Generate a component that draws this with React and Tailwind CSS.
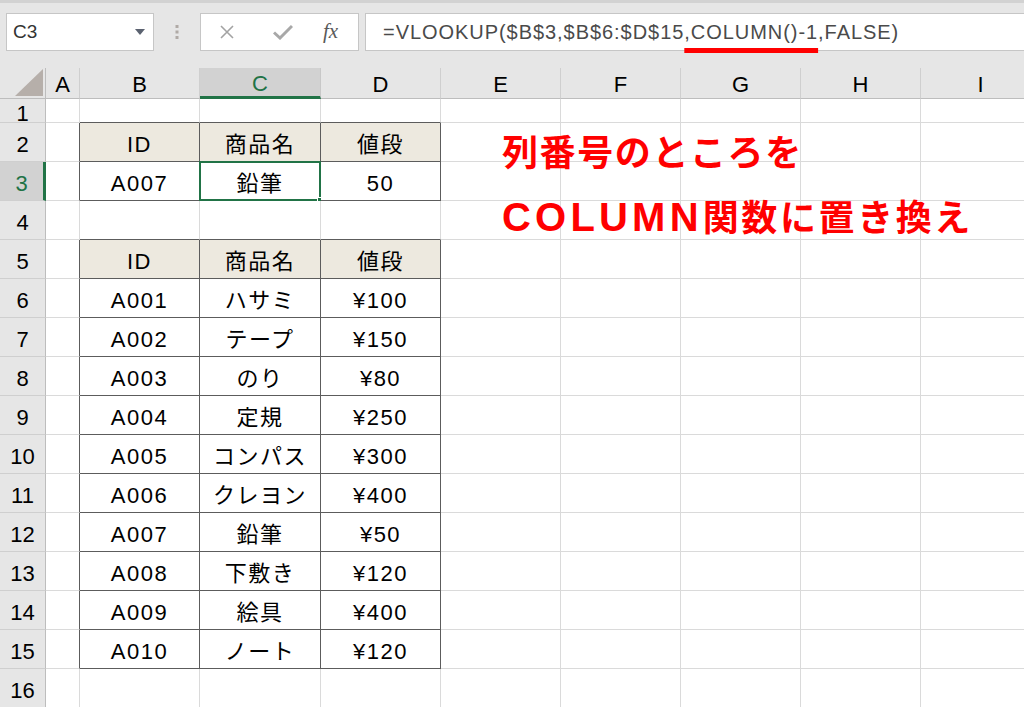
import React from 'react';

const COLS = ['A', 'B', 'C', 'D', 'E', 'F', 'G', 'H', 'I'];
const TABLE_ROWS = new Set([2, 3, 5, 6, 7, 8, 9, 10, 11, 12, 13, 14, 15]);
const HEAD_ROWS = new Set([2, 5]);

const items = [
  ['A001', 'ハサミ', '¥100'],
  ['A002', 'テープ', '¥150'],
  ['A003', 'のり', '¥80'],
  ['A004', '定規', '¥250'],
  ['A005', 'コンパス', '¥300'],
  ['A006', 'クレヨン', '¥400'],
  ['A007', '鉛筆', '¥50'],
  ['A008', '下敷き', '¥120'],
  ['A009', '絵具', '¥400'],
  ['A010', 'ノート', '¥120'],
];

// value shown in a cell, by row and column index (A = 0)
const cellText = (r, c) => {
  if (c < 1 || c > 3) return '';
  if (HEAD_ROWS.has(r)) return ['ID', '商品名', '値段'][c - 1];
  if (r === 3) return ['A007', '鉛筆', '50'][c - 1];
  if (r >= 6 && r <= 15) return items[r - 6][c - 1];
  return '';
};

const inTable = (r, c) => TABLE_ROWS.has(r) && c >= 1 && c <= 3;

const Cell = ({ r, c }) => {
  const darkRight = inTable(r, c) || (c === 0 && TABLE_ROWS.has(r));
  const darkBottom = inTable(r, c) || (TABLE_ROWS.has(r + 1) && c >= 1 && c <= 3);
  const selected = r === 3 && c === 2;
  return (
    <div
      className={[
        'relative flex items-center justify-center border-r border-b pt-[4px] text-[22px] tracking-[1.5px] text-black',
        darkRight ? 'border-r-[#5c5c5c]' : 'border-r-[#dadada]',
        darkBottom ? 'border-b-[#5c5c5c]' : 'border-b-[#dadada]',
        inTable(r, c) && HEAD_ROWS.has(r) ? 'bg-[#ede9df]' : 'bg-white',
      ].join(' ')}
    >
      {cellText(r, c)}
      {selected && (
        <>
          <div className="absolute -left-px -top-px -right-px -bottom-px border-2 border-[#217346]" />
          <div className="absolute -right-[4px] -bottom-[4px] h-[7px] w-[7px] border border-white bg-[#217346]" />
        </>
      )}
    </div>
  );
};

const FormulaBar = () => (
  <div className="relative h-[68px] bg-[#e6e6e6]">
    <div className="h-[3px] bg-[#d2d2d2]" />
    <div className="flex items-center gap-0 pt-[10px]">
      <div className="ml-[6px] flex h-[38px] w-[148px] items-center justify-between border border-[#c6c6c6] bg-white pl-[6px] pr-[8px]">
        <span className="text-[19px] text-[#333]">C3</span>
        <svg width="10" height="6" viewBox="0 0 10 6">
          <path d="M0 0 L10 0 L5 6 Z" fill="#5b6270" />
        </svg>
      </div>
      <div className="flex w-[46px] justify-center">
        <svg width="4" height="16" viewBox="0 0 4 16">
          <rect x="0.5" y="1" width="3" height="3" fill="#b0aaa6" />
          <rect x="0.5" y="6.5" width="3" height="3" fill="#b0aaa6" />
          <rect x="0.5" y="12" width="3" height="3" fill="#b0aaa6" />
        </svg>
      </div>
      <div className="flex h-[38px] w-[159px] items-center border border-[#c6c6c6] bg-white">
        <svg className="ml-[18px]" width="16" height="16" viewBox="0 0 16 16">
          <path d="M2 2 L14 14 M14 2 L2 14" stroke="#a3a3a3" strokeWidth="1.6" fill="none" />
        </svg>
        <svg className="ml-[38px]" width="20" height="16" viewBox="0 0 20 16">
          <path d="M1 8.5 L7 14 L19 2" stroke="#a8a8a8" strokeWidth="3" fill="none" />
        </svg>
        <span className="ml-[30px] font-['Liberation_Serif',serif] text-[21px] italic text-[#5a5a5a]">fx</span>
      </div>
      <div className="ml-[6px] flex h-[38px] flex-1 items-center border border-r-0 border-[#c6c6c6] bg-white pl-[17px]">
        <span className="font-['Liberation_Sans',sans-serif] text-[20px] tracking-[0.95px] text-[#4a4a4a]">
          =VLOOKUP($B$3,$B$6:$D$15
          <span className="underline decoration-[#ff0000] decoration-[5px] underline-offset-[9px]">,COLUMN()-1</span>
          ,FALSE)
        </span>
      </div>
    </div>
  </div>
);

export default function App() {
  const rows = Array.from({ length: 16 }, (_, i) => i + 1);
  return (
    <div className="h-[707px] w-[1024px] overflow-hidden bg-white font-['Liberation_Sans','Noto_Sans_CJK_JP',sans-serif]">
      <FormulaBar />
      <div className="relative">
        <div className="grid grid-cols-[46px_34px_120px_121px_120px_120px_120px_120px_120px_120px] grid-rows-[31px_24px_repeat(15,39px)]">
          {/* corner */}
          <div className="flex items-end justify-end border-r border-b border-[#bdbdbd] bg-[#e6e6e6] pb-[2px] pr-[2px]">
            <svg width="28" height="27" viewBox="0 0 28 27">
              <path d="M0 27 L28 27 L28 0 Z" fill="#b6afaa" />
            </svg>
          </div>
          {COLS.map((k) => (
            <div
              key={k}
              className={[
                'flex items-center justify-center border-r border-b pt-[2px] text-[22px]',
                k === 'C'
                  ? 'border-r-[#c8c8c8] border-b-[3px] border-b-[#217346] bg-[#d2d2d2] text-[#217346]'
                  : 'border-r-[#cfcfcf] border-b-[#bdbdbd] bg-[#e6e6e6] text-black',
              ].join(' ')}
            >
              {k}
            </div>
          ))}
          {rows.map((r) => (
            <React.Fragment key={r}>
              <div
                className={[
                  'flex items-center justify-center border-b border-b-[#cfcfcf] pt-[5px] text-[22px]',
                  r === 3
                    ? 'border-r-[3px] border-r-[#217346] bg-[#d2d2d2] text-[#217346]'
                    : 'border-r border-r-[#bdbdbd] bg-[#e6e6e6] text-black',
                ].join(' ')}
              >
                {r}
              </div>
              {COLS.map((k, c) => (
                <Cell key={k} r={r} c={c} />
              ))}
            </React.Fragment>
          ))}
        </div>
        {/* text box laid over the sheet */}
        <div className="absolute left-[502px] top-[50px] font-['Noto_Sans_CJK_JP',sans-serif] text-[36px] font-bold leading-[65px] tracking-[1.6px] text-[#ff0000]">
          <div>列番号のところを</div>
          <div className="tracking-[2.6px]">
            <span className="font-['Liberation_Sans',sans-serif] text-[40px] tracking-[4.2px]">COLUMN</span>関数に置き換え
          </div>
        </div>
      </div>
    </div>
  );
}
